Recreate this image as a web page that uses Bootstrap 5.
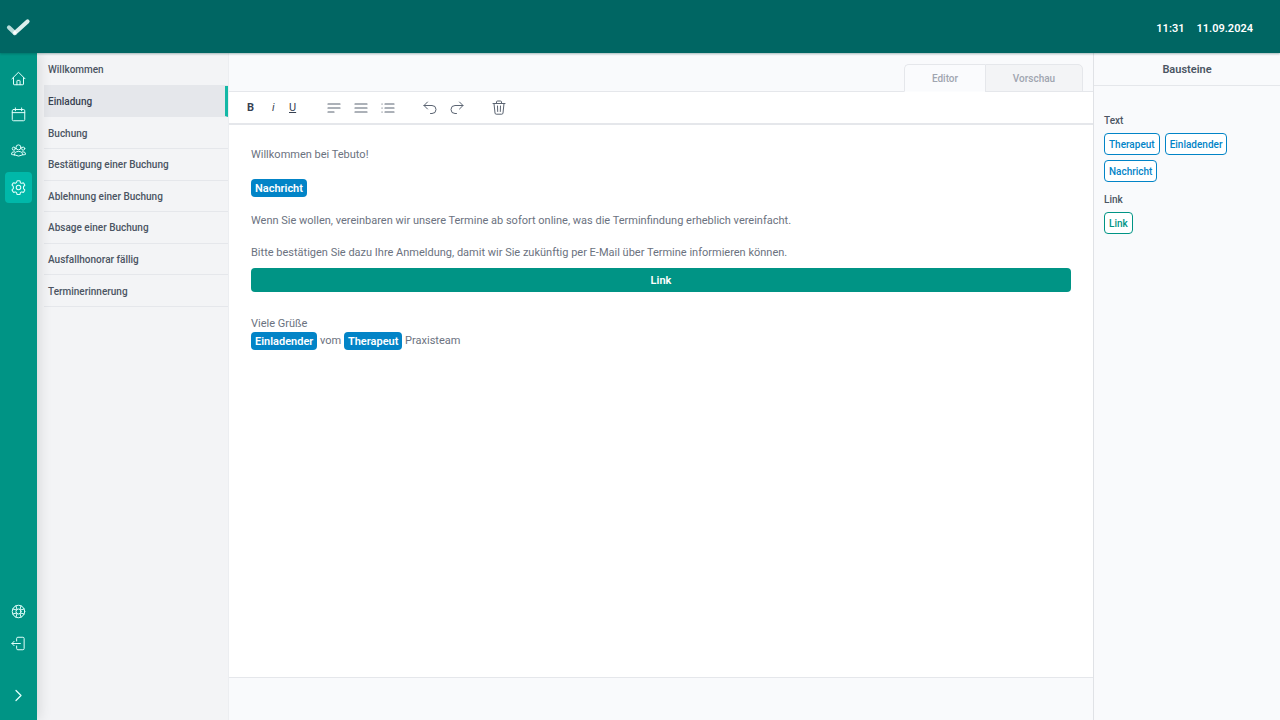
<!DOCTYPE html>
<html lang="de">
<head>
<meta charset="utf-8">
<meta name="viewport" content="width=device-width, initial-scale=1">
<title>Tebuto – Vorlagen</title>
<link href="https://cdn.jsdelivr.net/npm/bootstrap@5.3.0/dist/css/bootstrap.min.css" rel="stylesheet">
<style>
body{font-family:Roboto,"Liberation Sans",sans-serif;font-size:11px;line-height:16px;color:#6b7280;background:#f9fafc}
.topbar{height:53px;background:#006663;color:#fff;font-size:11px;font-weight:600;padding:0 27px 0 6px;box-shadow:0 1px 2px rgba(0,60,60,.35);z-index:3}
.rail{width:37px;background:#009485;padding:11px 0;z-index:2;box-shadow:2px 0 14px rgba(0,0,0,.12)}
.rail a{width:27px;height:28px;border-radius:4px;color:#e2fffb}
.rail a.active{background:#00b8a9;height:31px}
.ico{fill:none;stroke:currentColor;stroke-width:1.6;stroke-linecap:round;stroke-linejoin:round;display:block}
.ico.thin{stroke-width:1}
.submenu{width:192px;background:#f3f4f6;border-right:1px solid #eceef1}
.submenu nav{height:254px;padding:1px 0 0 7px}
.submenu a{color:#4b5563;font-size:10px;font-weight:500;padding:2px 0 0 4px;border-bottom:1px solid #e5e7eb}
.submenu a.active{background:#e5e7eb;color:#374151;border-right:3px solid #14b8a6}
.tabs{height:39px;padding:11px 10px 0;border-bottom:1px solid #e5e7eb}
.tabs .nav-link{height:28px;padding:1px 0 0;border:1px solid #e5e7eb;color:#a0a5b0;font-size:10px;font-weight:500;background:#f3f4f6;border-radius:0 5px 0 0}
.tabs .nav-link.active{border-radius:5px 0 0 0;border-right:0;border-bottom-color:#fcfdfe;background:#fafbfd}
.tabs .t-edit{width:81px}.tabs .t-prev{width:98px}
.tools{height:33px;background:#fff;border-bottom:2px solid #e5e7eb;padding-left:14px}
.tools button{border:0;background:none;padding:0;color:#5b6472;height:24px;font-size:11px}
.tools .fmt{width:21px;padding-top:1px;color:#374151}.tools .al{width:27px}
.tools .ico{stroke-width:1.2}
.tools .ico.thin{stroke-width:1}
.tools .tool-set{margin-right:15px}
.tools .text-set{margin-right:14px}
.paper{background:#fff;border-bottom:1px solid #e5e7eb;padding:22px 22px 21px;margin-bottom:42px}
.paper p{margin:0 0 16px}
.token{display:inline-block;background:#0284c7;color:#fff;font-weight:600;font-size:11px;line-height:17px;border-radius:4px;padding:1px 4px 0;vertical-align:top}
.paper .sign{line-height:18px}
.paper .lead-in{margin-bottom:7px}
.link-btn{background:#009485;color:#fff;font-weight:600;font-size:11px;line-height:16px;padding:5px 4px 3px;border:0;border-radius:4px}
.blocks{width:187px;border-left:1px solid #e0e2e6}
.blocks h1{font-size:11px;line-height:34px;height:33px;font-weight:600;color:#4b5563;border-bottom:1px solid #e5e7eb}
.blocks h2{font-size:10px;line-height:16px;font-weight:500;color:#4b5563;margin:0 0 4px}
.parts{padding:27px 10px 0}
.chip{border:1px solid #0284c7;color:#0284c7;background:#fff;border-radius:4px;padding:1px 3px 0;height:22px;font-size:10px;font-weight:500;line-height:19px}
.chip.teal{border-color:#009485;color:#009485}
.chips{gap:5px;margin-bottom:10px}
.chip{padding-left:4px;padding-right:4px}
</style>
</head>
<body class="d-flex flex-column vh-100 overflow-hidden">
<header class="topbar d-flex align-items-center justify-content-between position-relative flex-shrink-0">
  <a href="#" aria-label="Tebuto"><svg class="d-block" width="26" height="22" viewBox="0 0 26 22" fill="none" stroke-linecap="round" stroke-linejoin="round"><path d="M3 11.5 8.800 17" stroke="#b9dcda" stroke-width="4.200"/><path d="M8.800 17 21.500 5.500" stroke="#dceeed" stroke-width="4.200"/><path d="m7 16.800 1.800 1.600 2-1.800-2-2z" fill="#fff"/></svg></a>
  <div class="d-flex mt-1"><span class="me-2">11:31</span><span class="ms-1">11.09.2024</span></div>
</header>
<div class="d-flex flex-grow-1">
  <nav class="rail d-flex flex-column align-items-center position-relative" aria-label="Hauptmenü">
    <a href="#" class="d-flex align-items-center justify-content-center mb-2" aria-label="Start"><svg class="ico" width="15" height="15" viewBox="0 0 24 24"><path d="M1.500 12.500 12 2l10.500 10.500M4 10.500V21q0 1 1 1h14q1 0 1-1V10.500M9.500 22v-6q0-1 1-1h3q1 0 1 1v6"/></svg></a>
    <a href="#" class="d-flex align-items-center justify-content-center mb-2" aria-label="Kalender"><svg class="ico" width="15" height="15" viewBox="0 0 24 24"><rect x="2" y="4" width="20" height="18" rx="2"/><path d="M2 9h20M7 1.500V6m10-4.500V6"/></svg></a>
    <a href="#" class="d-flex align-items-center justify-content-center mb-2" aria-label="Klienten"><svg class="ico" width="15" height="15" viewBox="0 0 24 24"><circle cx="12" cy="7" r="4"/><circle cx="4.500" cy="9" r="2.500"/><circle cx="19.500" cy="9" r="2.500"/><path d="M5.500 19a6.500 5.500 0 0 1 13 0q-6 4-13 0zM6 14q-5-1-5.500 4 2 1 4.500 1M18 14q5-1 5.500 4-2 1-4.500 1"/></svg></a>
    <a href="#" class="active d-flex align-items-center justify-content-center" aria-label="Einstellungen"><svg class="ico" width="15" height="15" viewBox="1 1 22 22"><path d="M9.600 3.100c.1-.5.500-.9 1.100-.9h2.600c.6 0 1 .4 1.100.9l.2 1.300c.1.400.3.700.6.900l.8.400c.4.200.8.200 1.100.1l1.200-.5c.5-.2 1.100 0 1.400.5l1.300 2.200c.3.500.2 1.100-.3 1.400l-1 .8c-.5.400-.4.700-.4 2s0 1.600.4 1.900l1 .9c.4.300.5.900.3 1.400l-1.300 2.200c-.3.500-.9.700-1.400.5l-1.200-.5c-.4-.1-.8-.1-1.100.1l-.8.500c-.3.200-.5.500-.6.900l-.2 1.200c-.1.600-.5 1-1.100 1h-2.600c-.6 0-1-.4-1.100-1l-.2-1.200c-.1-.4-.3-.7-.6-.9l-.8-.5c-.3-.2-.7-.2-1.100-.1l-1.200.5c-.5.200-1.100 0-1.400-.5L2.800 16.200c-.3-.5-.2-1.100.3-1.400l1-.9c.5-.3.400-.7.400-1.900s0-1.600-.4-2l-1-.8c-.5-.3-.6-.9-.3-1.400l1.300-2.200c.3-.5.900-.7 1.400-.5l1.200.5c.4.100.8.100 1.100-.1l.8-.4c.3-.2.500-.5.600-.9z"/><circle cx="12" cy="12" r="3.300"/></svg></a>
    <a href="#" class="d-flex align-items-center justify-content-center mt-auto mb-1" aria-label="Hilfe"><svg class="ico" width="15" height="15" viewBox="0 0 24 24"><circle cx="12" cy="12" r="10"/><circle cx="12" cy="12" r="4"/><path d="M9.500 8.700 8 2.900M8.700 9.500 2.900 8M14.500 8.700 16 2.900M15.300 9.500 21.100 8M9.500 15.300 8 21.100M8.700 14.500 2.900 16M14.500 15.300 16 21.100M15.300 14.500 21.100 16"/></svg></a>
    <a href="#" class="d-flex align-items-center justify-content-center mb-4" aria-label="Abmelden"><svg class="ico" width="15" height="15" viewBox="0 0 24 24"><path d="M9 8V4q0-2 2-2h8q2 0 2 2v16q0 2-2 2h-8q-2 0-2-2v-4M15 12H1.500M5 8.500 1.500 12 5 15.500"/></svg></a>
    <a href="#" class="d-flex align-items-center justify-content-center" aria-label="Menü ausklappen"><svg class="ico" width="15" height="15" viewBox="0 0 24 24"><path d="m8 4 8 8-8 8" stroke-width="2"/></svg></a>
  </nav>
  <aside class="submenu flex-shrink-0">
    <nav class="d-flex flex-column" aria-label="Vorlagen">
      <a href="#" class="flex-fill d-flex align-items-center text-decoration-none">Willkommen</a>
      <a href="#" class="flex-fill d-flex align-items-center text-decoration-none active" aria-current="page">Einladung</a>
      <a href="#" class="flex-fill d-flex align-items-center text-decoration-none">Buchung</a>
      <a href="#" class="flex-fill d-flex align-items-center text-decoration-none">Bestätigung einer Buchung</a>
      <a href="#" class="flex-fill d-flex align-items-center text-decoration-none">Ablehnung einer Buchung</a>
      <a href="#" class="flex-fill d-flex align-items-center text-decoration-none">Absage einer Buchung</a>
      <a href="#" class="flex-fill d-flex align-items-center text-decoration-none">Ausfallhonorar fällig</a>
      <a href="#" class="flex-fill d-flex align-items-center text-decoration-none">Terminerinnerung</a>
    </nav>
  </aside>
  <main class="flex-grow-1 d-flex flex-column">
    <div class="tabs d-flex justify-content-end">
      <button type="button" class="nav-link active t-edit">Editor</button>
      <button type="button" class="nav-link t-prev">Vorschau</button>
    </div>
    <div class="tools d-flex align-items-center flex-shrink-0">
      <div class="text-set d-flex">
        <button type="button" class="fmt fw-bold text-start ps-1" aria-label="Fett">B</button>
        <button type="button" class="fmt fst-italic text-start ps-2" aria-label="Kursiv">i</button>
        <button type="button" class="fmt text-decoration-underline text-start ps-1" aria-label="Unterstrichen">U</button>
      </div>
      <div class="tool-set d-flex">
        <button type="button" class="al d-flex align-items-center justify-content-center" aria-label="Linksbündig"><svg class="ico" width="14" height="12" viewBox="0 0 14 12"><path d="M1 2h12M1 6h12M1 10h6"/></svg></button>
        <button type="button" class="al d-flex align-items-center justify-content-center" aria-label="Blocksatz"><svg class="ico" width="14" height="12" viewBox="0 0 14 12"><path d="M1 2h12M1 6h12M1 10h12"/></svg></button>
        <button type="button" class="al d-flex align-items-center justify-content-center" aria-label="Liste"><svg class="ico" width="14" height="12" viewBox="0 0 14 12"><path d="M4 2h9M4 6h9M4 10h9M1 2h.1M1 6h.1M1 10h.1"/></svg></button>
      </div>
      <div class="tool-set d-flex">
        <button type="button" class="al d-flex align-items-center justify-content-center" aria-label="Rückgängig"><svg class="ico thin" width="14" height="14" viewBox="0 0 14 14"><path d="M4.500 1 1 4.500 4.500 8M1 4.500h8a4 4 0 0 1 0 8H7.500"/></svg></button>
        <button type="button" class="al d-flex align-items-center justify-content-center" aria-label="Wiederholen"><svg class="ico thin" width="14" height="14" viewBox="0 0 14 14"><path d="M9.500 1 13 4.500 9.500 8M13 4.500H5a4 4 0 0 0 0 8h1.500"/></svg></button>
      </div>
      <button type="button" class="al d-flex align-items-center justify-content-center" aria-label="Löschen"><svg class="ico thin" width="14" height="15" viewBox="0 0 14 15"><path d="M1 3.500h12M4.500 3.500V2q0-1 1-1h3q1 0 1 1v1.500M2 3.500 3 13q.1 1.200 1.200 1.200h5.600Q10.900 14.200 11 13l1-9.500M5.500 6l.2 5.500M8.500 6l-.2 5.500"/></svg></button>
    </div>
    <article class="paper flex-grow-1" contenteditable="true" spellcheck="false">
      <p>Willkommen bei Tebuto!</p>
      <p><span class="token">Nachricht</span></p>
      <p>Wenn Sie wollen, vereinbaren wir unsere Termine ab sofort online, was die Terminfindung erheblich vereinfacht.</p>
      <p class="lead-in">Bitte bestätigen Sie dazu Ihre Anmeldung, damit wir Sie zukünftig per E-Mail über Termine informieren können.</p>
      <button type="button" class="link-btn d-block w-100 mb-4">Link</button>
      <div>Viele Grüße</div>
      <div class="sign"><span class="token">Einladender</span> vom <span class="token">Therapeut</span> Praxisteam</div>
    </article>
  </main>
  <aside class="blocks flex-shrink-0">
    <h1 class="text-center mb-0">Bausteine</h1>
    <div class="parts">
      <h2>Text</h2>
      <div class="chips d-flex flex-wrap">
        <button type="button" class="chip">Therapeut</button>
        <button type="button" class="chip">Einladender</button>
        <button type="button" class="chip">Nachricht</button>
      </div>
      <h2>Link</h2>
      <button type="button" class="chip teal">Link</button>
    </div>
  </aside>
</div>
<script src="https://cdn.jsdelivr.net/npm/bootstrap@5.3.0/dist/js/bootstrap.bundle.min.js"></script>
</body>
</html>
